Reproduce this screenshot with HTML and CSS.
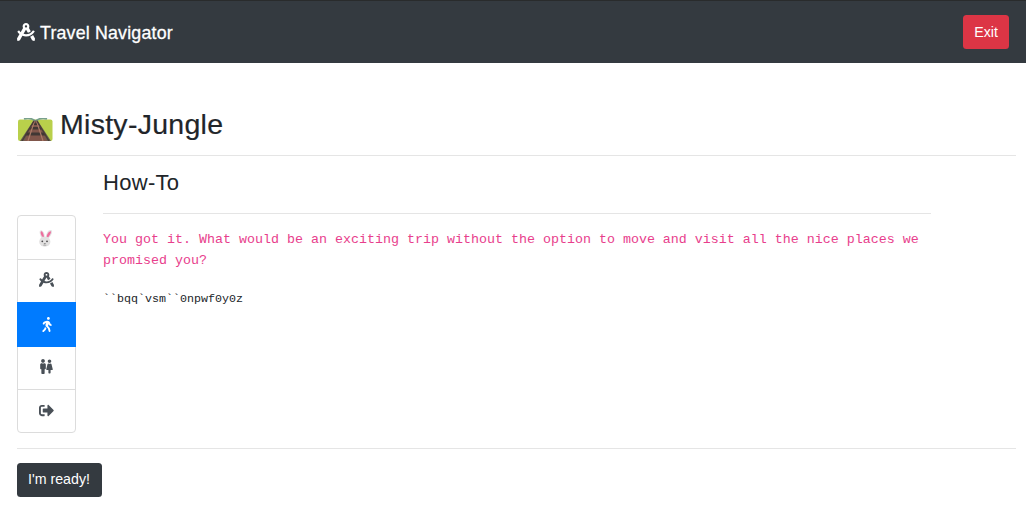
FILE: index.html
```html
<!DOCTYPE html>
<html lang="en">
<head>
<meta charset="utf-8">
<title>Travel Navigator</title>
<link rel="stylesheet" href="styles.css">
</head>
<body>
<svg class="sprite" aria-hidden="true">
  <symbol id="compass" viewBox="0 0 512 512"><path d="M457.01 344.42c-25.05 20.33-52.63 37.18-82.54 49.05l54.38 94.19 53.95 23.04c9.81 4.19 20.89-2.21 22.17-12.8l7.02-58.25-54.98-95.23zm42.49-94.56c4.86-7.67 1.89-17.99-6.05-22.39l-28.07-15.57c-7.48-4.15-16.61-1.46-21.26 5.72C403.01 281.15 332.25 320 256 320c-23.93 0-47.23-4.25-69.41-11.53l67.36-116.68c.7.02 1.34.21 2.04.21s1.35-.19 2.04-.21l51.09 88.5c31.23-8.96 59.56-25.75 82.61-48.92l-51.79-89.71C347.39 128.03 352 112.63 352 96c0-53.02-42.98-96-96-96s-96 42.98-96 96c0 16.63 4.61 32.03 12.05 45.66l-68.3 118.31c-12.55-11.61-23.96-24.59-33.68-39-4.79-7.1-13.97-9.62-21.38-5.33l-27.75 16.07c-7.85 4.54-10.63 14.9-5.64 22.47 15.57 23.64 34.69 44.21 55.98 62.02L0 439.66l7.02 58.25c1.28 10.59 12.36 16.99 22.17 12.8l53.95-23.04 70.8-122.63C186.13 377.28 220.62 384 256 384c99.05 0 190.88-51.01 243.5-134.14zM256 64c17.67 0 32 14.33 32 32s-14.33 32-32 32-32-14.33-32-32 14.33-32 32-32z"/></symbol>
</svg>
<header class="navbar">
  <div class="brand"><svg class="brand-icon"><use href="#compass"/></svg><span>Travel Navigator</span></div>
  <button class="btn btn-exit">Exit</button>
</header>
<main class="page">
  <h1 class="title">
    <svg class="track" viewBox="0 0 35 23">
      <rect y="1.5" width="34.5" height="21.5" rx="2" fill="#b9d04b"/>
      <path d="M6 1Q12-1 17.500 3Q23-1 29 1" fill="none" stroke="#78a08c" stroke-width="1.800"/>
      <path d="M15.500 2.500h4L33 23H2Z" fill="#655f50"/>
      <path d="M15.500 3.500h4L29 23H6Z" fill="#80564b"/>
      <path d="M15 4.500h5l1 2.500h-7zM13 9h9l1.500 2.500h-12zM8.500 14.500h18l1.500 3h-21z" fill="#403734"/>
      <path d="M16.500 3L10 23M18.500 3L25 23" fill="none" stroke="#ab7a66" stroke-width="1.200"/>
      <path d="M16 3L4 23M19 3L31 23" fill="none" stroke="#4a3c36" stroke-width="1.400"/>
    </svg>
    <span>Misty-Jungle</span>
  </h1>
  <div class="content">
    <nav class="steps">
      <a class="step"><svg class="rabbit" viewBox="0 0 16 18">
        <path d="M3.500 9C1 4 1 .8 3.500 1.200C6 2 6.900 6 7 9Z" fill="#e5e2e4"/>
        <path d="M7.500 8.500C8 4 10.500 .2 13.300 1C15.500 3 12.500 7 10.500 9.500Z" fill="#e5e2e4"/>
        <path d="M4 7.500C2.300 4.500 2.300 2.300 3.500 2.300C5 3 5.800 5.500 6 8ZM8.600 7.500C9.200 4.500 11.200 2 12.900 2.300C13.500 4 11.500 6.500 10 8.500Z" fill="#ed6f9d"/>
        <ellipse cx="6.800" cy="12.800" rx="5.600" ry="5" fill="#e2e1e1"/>
        <circle cx="4.300" cy="12.300" r=".9" fill="#4b494b"/><circle cx="9" cy="12.300" r=".9" fill="#4b494b"/>
        <path d="M5.500 14.300h2.600l-1.300 1.300z" fill="#777"/><path d="M5.300 16.200h3" stroke="#999" stroke-width=".8"/>
      </svg></a>
      <a class="step"><svg class="icon"><use href="#compass"/></svg></a>
      <a class="step active"><svg class="icon walk" viewBox="0 0 320 512"><path d="M208 96c26.500 0 48-21.500 48-48S234.500 0 208 0s-48 21.500-48 48 21.500 48 48 48zm94.500 149.100l-23.300-11.800-9.700-29.400c-14.700-44.600-55.700-75.800-102.200-75.900-36-.1-55.900 10.100-93.300 25.200-21.600 8.700-39.300 25.200-49.700 46.200L17.600 213c-7.800 15.800-1.500 35 14.200 42.900 15.600 7.900 34.600 1.500 42.500-14.300L81 228c3.500-7 9.300-12.500 16.500-15.400l26.800-10.800-15.200 60.700c-5.200 20.800.4 42.900 14.900 58.800l59.900 65.400c7.200 7.900 12.300 17.400 14.900 27.700l18.300 73.300c4.300 17.100 21.700 27.600 38.800 23.300 17.100-4.300 27.600-21.700 23.300-38.800l-22.200-89c-2.600-10.300-7.700-19.900-14.900-27.700l-45.500-49.700 17.200-68.700 5.500 16.500c5.300 16.100 16.700 29.400 31.700 37l23.300 11.800c15.600 7.900 34.600 1.500 42.500-14.300 7.700-15.700 1.400-35.100-14.300-43zM73.600 385.800c-3.200 8.100-8 15.400-14.200 21.500l-50 50.100c-12.500 12.500-12.500 32.800 0 45.300s32.700 12.500 45.200 0l59.400-59.400c6.100-6.100 10.900-13.400 14.200-21.500l13.500-33.800c-55.300-60.300-38.700-41.800-47.400-53.700l-20.700 51.500z"/></svg></a>
      <a class="step"><svg class="icon male" viewBox="0 0 192 512"><path d="M96 0c35.346 0 64 28.654 64 64s-28.654 64-64 64-64-28.654-64-64S60.654 0 96 0m48 144h-11.360c-22.711 10.443-49.590 10.894-73.280 0H48c-26.510 0-48 21.490-48 48v136c0 13.255 10.745 24 24 24h16v136c0 13.255 10.745 24 24 24h64c13.255 0 24-10.745 24-24V352h16c13.255 0 24-10.745 24-24V192c0-26.510-21.490-48-48-48z"/></svg><svg class="icon female" viewBox="0 0 256 512"><path d="M128 0c35.346 0 64 28.654 64 64s-28.654 64-64 64c-35.346 0-64-28.654-64-64S92.654 0 128 0m119.283 354.179l-48-192A24 24 0 0 0 176 144h-11.360c-22.711 10.443-49.590 10.894-73.280 0H80a24 24 0 0 0-23.283 18.179l-48 192C4.935 369.305 16.383 384 32 384h56v104c0 13.255 10.745 24 24 24h32c13.255 0 24-10.745 24-24V384h56c15.591 0 27.071-14.671 23.283-29.821z"/></svg></a>
      <a class="step"><svg class="icon" viewBox="0 0 512 512"><path d="M497 273L329 441c-15 15-41 4.500-41-17v-96H152c-13.300 0-24-10.700-24-24v-96c0-13.300 10.700-24 24-24h136V88c0-21.400 25.900-32 41-17l168 168c9.300 9.400 9.300 24.600 0 34zM192 436v-40c0-6.600-5.400-12-12-12H96c-17.700 0-32-14.300-32-32V160c0-17.700 14.300-32 32-32h84c6.600 0 12-5.400 12-12V76c0-6.600-5.400-12-12-12H96c-53 0-96 43-96 96v192c0 53 43 96 96 96h84c6.600 0 12-5.400 12-12z"/></svg></a>
    </nav>
    <section class="howto">
      <h2 class="subtitle">How-To</h2>
      <p class="message">You got it. What would be an exciting trip without the option to move and visit all the nice places we promised you?</p>
      <pre class="code">``bqq`vsm``0npwf0y0z</pre>
    </section>
  </div>
  <footer class="footer"><button class="btn btn-ready">I'm ready!</button></footer>
</main>
</body>
</html>
```
FILE: styles.css
```css
* { box-sizing: border-box; }
body { margin: 0; background: #fff; color: #212529; font-family: "Liberation Sans", Arial, sans-serif; }
.sprite { display: none; }
svg { display: block; flex: none; fill: currentColor; }
.navbar { display: flex; align-items: center; justify-content: space-between; height: 63px; padding: 0 17px 1px; background: #343a40; border-top: 1px solid #292b2c; }
.brand { display: flex; align-items: center; gap: 5px; color: #fff; font-size: 17.8px; line-height: 24px; letter-spacing: .19px; -webkit-text-stroke: .3px #fff; }
.brand span { padding-top: 2px; }
.brand-icon { width: 18px; height: 18px; }
.btn { display: flex; align-items: center; justify-content: center; height: 34px; padding: 0; border: 0; border-radius: 3.5px; color: #fff; font: 14.2px/20px "Liberation Sans", Arial, sans-serif; }
.btn-exit { width: 46px; background: #dc3545; }
.btn-ready { width: 85px; padding: 0 1px 2px 0; background: #343a40; }
.page { padding: 0 10px 0 17px; }
.title { display: flex; gap: 8px; height: 93px; margin: 0; padding-top: 44px; border-bottom: 1px solid #e5e5e5; font-size: 28.5px; font-weight: 400; line-height: 34px; letter-spacing: .28px; -webkit-text-stroke: .2px #212529; }
.track { width: 35px; height: 23px; margin: 11px 0 0 1px; }
.title span { margin-left: -1px; }
.content { display: flex; gap: 27px; height: 292px; }
.steps { width: 59px; height: 218px; margin-top: 59px; border: 1px solid #dcdcdc; border-radius: 4px; display: grid; grid-template-rows: 44px 42px 45px 43px 42px; color: #495057; }
.step { display: flex; align-items: center; justify-content: center; padding: 0 1px 2px 0; border-bottom: 1px solid #dcdcdc; }
.step:first-child { padding: 0 1px 0 0; }
.step:last-child { border-bottom: 0; }
.step:nth-child(2) { padding-bottom: 3px; border-bottom: 0; }
.step:nth-child(4) { padding-bottom: 3px; }
.step.active { margin: 0 -1px; padding: 0 0 1px; background: #007bff; border: 0; color: #fff; }
.icon { width: 15px; height: 15px; }
.walk { width: 10px; }
.male { width: 6px; }
.female { width: 7px; }
.rabbit { width: 16px; height: 18px; }
.howto { width: 828px; }
.subtitle { height: 58px; margin: 0; padding-top: 13px; border-bottom: 1px solid #e5e5e5; font-size: 22px; font-weight: 400; line-height: 27px; letter-spacing: .3px; }
.message { margin: 15px 0 0; color: #e83e8c; font: 13.333px/21px "Liberation Mono", monospace; }
.code { margin: 20px 0 0; font: 11.667px/16px "Liberation Mono", monospace; }
.footer { padding-top: 14px; border-top: 1px solid #e5e5e5; }
```
